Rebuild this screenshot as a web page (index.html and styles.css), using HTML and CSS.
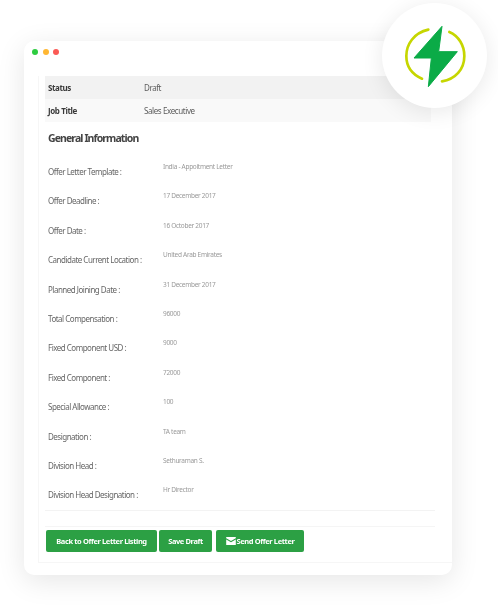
FILE: index.html
```html
<!DOCTYPE html>
<html>
<head>
	<meta charset="UTF-8">
	<title>Offer Letter</title>
	<link rel="stylesheet" href="styles.css">
</head>

<body>
	<div class="badge">
		<svg class="bolt" viewBox="95 66 198 198">
			<path d="M174 86 C130 96 108 130 108 165 C108 195 125 220 155 233" fill="none" stroke="#c6d600" stroke-width="8" stroke-linecap="round"/>
			<path d="M237 93 C265 105 282 133 282 165 C282 205 255 235 215 241" fill="none" stroke="#c6d600" stroke-width="8" stroke-linecap="round"/>
			<path d="M215 76 L131 171 L183 171 L174 257 L261 152 L205 152 Z" fill="#0bab47" stroke="#0bab47" stroke-width="3" stroke-linejoin="round"/>
		</svg>
	</div>

	<div class="card">
		<div class="dots">
			<span class="dot green"></span>
			<span class="dot yellow"></span>
			<span class="dot red"></span>
		</div>

		<div class="panel">
			<div class="content">
				<div class="status-row odd"><b>Status</b><span>Draft</span></div>
				<div class="status-row even"><b>Job Title</b><span>Sales Executive</span></div>

				<h2>General Information</h2>

				<ul class="info">
					<li><label>Offer Letter Template :</label><span>India - Appoitment Letter</span></li>
					<li><label>Offer Deadline :</label><span>17 December 2017</span></li>
					<li><label>Offer Date :</label><span>16 October 2017</span></li>
					<li><label>Candidate Current Location :</label><span>United Arab Emirates</span></li>
					<li><label>Planned Joining Date :</label><span>31 December 2017</span></li>
					<li><label>Total Compensation :</label><span>96000</span></li>
					<li><label>Fixed Component USD :</label><span>9000</span></li>
					<li><label>Fixed Component :</label><span>72000</span></li>
					<li><label>Special Allowance :</label><span>100</span></li>
					<li><label>Designation :</label><span>TA team</span></li>
					<li><label>Division Head :</label><span>Sethuraman S.</span></li>
					<li><label>Division Head Designation :</label><span>Hr Director</span></li>
				</ul>

				<div class="actions">
					<a class="btn back">Back to Offer Letter Listing</a>
					<a class="btn save">Save Draft</a>
					<a class="btn send">
						<svg class="mail" viewBox="0 0 12 10">
							<path d="M0 0 H12 V1.5 L6 5 L0 1.5 Z M0 3 L6 6.5 L12 3 V10 H0 Z" fill="#fff"/>
						</svg>Send Offer Letter</a>
				</div>
			</div>
		</div>
	</div>
</body>
</html>
```

FILE: styles.css
```css
*
{
	margin: 0;
	padding: 0;
	box-sizing: border-box;
}
body
{
	position: relative;
	width: 498px;
	height: 609px;
	overflow: hidden;
	background: #fff;
	font-family: "Noto Sans", "Open Sans", sans-serif;
}
.badge
{
	position: absolute;
	left: 382px;
	top: 3px;
	width: 105px;
	height: 105px;
	border-radius: 50%;
	background: #fff;
	box-shadow: 0 4px 22px rgba(0, 0, 0, 0.09);
	display: flex;
	align-items: center;
	justify-content: center;
	z-index: 2;
}
.bolt
{
	width: 66px;
	height: 66px;
	filter: blur(0.3px);
}
.card
{
	width: 428px;
	height: 534px;
	margin: 41px 0 0 24px;
	background: #fff;
	border-radius: 10px;
	box-shadow: 0 6px 28px rgba(0, 0, 0, 0.1);
	display: flex;
	flex-direction: column;
}
.dots
{
	display: flex;
	gap: 4.5px;
	padding: 8px 0 0 8px;
	height: 35px;
}
.dot
{
	width: 6px;
	height: 6px;
	border-radius: 50%;
}
.green { background: #2ecc40; }
.yellow { background: #ffb733; }
.red { background: #fb5a55; }
.panel
{
	margin-left: 14px;
	height: 487px;
	border-left: 1px solid #f6f6f6;
	border-bottom: 1px solid #f6f6f6;
	padding-left: 6px;
}
.content
{
	filter: blur(0.5px);
}
.status-row
{
	display: flex;
	align-items: center;
	width: 386px;
	height: 23px;
	padding-left: 3px;
	font-size: 8px;
	letter-spacing: -0.4px;
	color: #5c5c5c;
}
.status-row b
{
	width: 96px;
	color: #3a3a3a;
}
.odd { background: #f2f2f2; }
.even { background: #f9f9f9; }
h2
{
	font-size: 10.5px;
	line-height: 16px;
	letter-spacing: -0.9px;
	color: #444;
	padding: 8px 0 0 3px;
	font-weight: 700;
}
.info
{
	list-style: none;
	width: 390px;
	margin-top: 11px;
	margin-bottom: 1px;
	border-bottom: 1px solid #f3f3f3;
}
.info li
{
	display: flex;
	height: 29.4px;
	padding-left: 3px;
}
.info label
{
	width: 115px;
	padding-top: 9px;
	font-size: 8px;
	line-height: 12px;
	letter-spacing: -0.5px;
	color: #666;
}
.info span
{
	padding-top: 4px;
	font-size: 6.5px;
	line-height: 12px;
	letter-spacing: -0.3px;
	color: #999;
}
.actions
{
	display: flex;
	width: 390px;
	margin-top: 15px;
	padding: 3px 0 0 1px;
	border-top: 1px solid #f5f5f5;
}
.btn
{
	display: flex;
	align-items: center;
	justify-content: center;
	height: 22px;
	background: #2ca044;
	border-radius: 2px;
	color: #fff;
	font-size: 7.5px;
	font-weight: 700;
	letter-spacing: -0.4px;
}
.back { width: 111px; }
.save { width: 53px; margin-left: 2px; }
.send { width: 88px; margin-left: 4px; }
.mail
{
	width: 10px;
	height: 8px;
	margin-right: 1px;
}
```
